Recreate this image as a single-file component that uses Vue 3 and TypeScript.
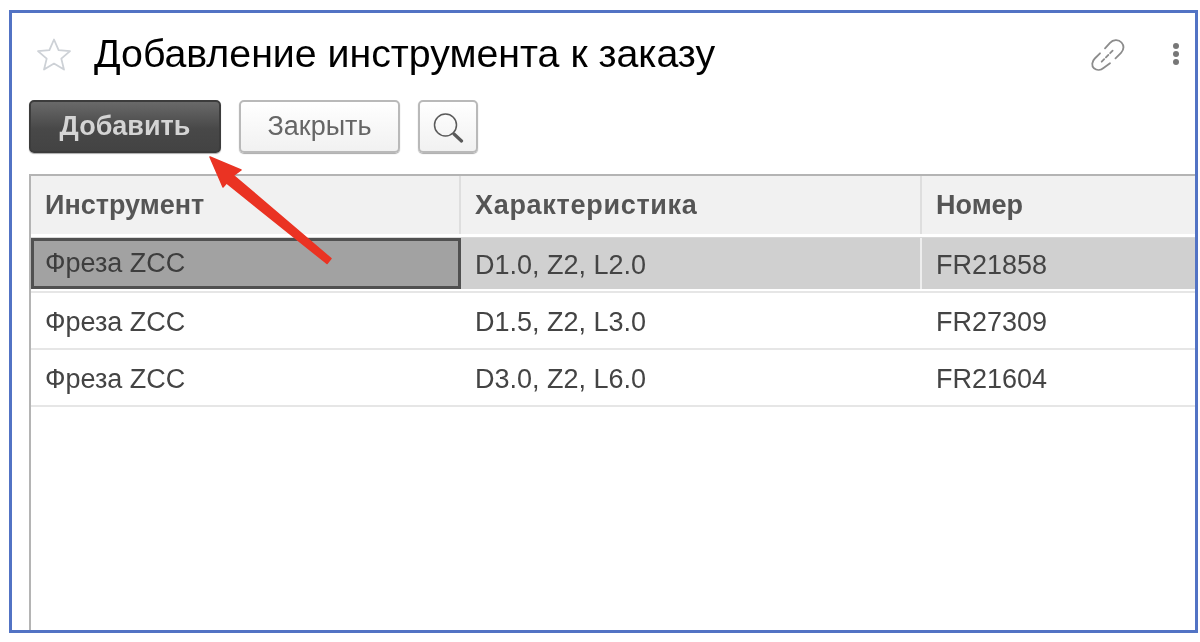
<template>
  <div class="frame">
    <header class="title-row">
      <svg class="star" width="36" height="34" viewBox="0 0 36 34">
        <path d="M18 2.500l4.600 10.600 11.400 1-8.700 7.500 2.700 11-10-6-10 6 2.700-11L2 14.100l11.400-1z" fill="#fff" stroke="#cdd1d6" stroke-width="1.800" stroke-linejoin="round" />
      </svg>
      <h1 class="title">Добавление инструмента к заказу</h1>
      <div class="title-icons">
        <svg class="link" width="36" height="36" viewBox="0 0 36 36" fill="none" stroke="#8c8c8c" stroke-width="1.800" stroke-linecap="round">
          <path d="M15 12.300L20 6.800C23 3.500 28.500 3 31.500 6.500 34.500 10 33.500 14 31 17L25.500 22.300" />
          <path d="M10 17.300L4.800 22.500C1.800 25.500 1.300 29.800 4 32.300 7 34.800 11 34 13.500 32L20 27.300" />
          <path d="M11.700 25.700L23.300 14" stroke-dasharray="3.500 2.500" />
        </svg>
        <div class="dots"><i /><i /><i /></div>
      </div>
    </header>

    <div class="toolbar">
      <button class="btn primary">Добавить</button>
      <button class="btn close">Закрыть</button>
      <button class="btn search">
        <svg width="32" height="32" viewBox="0 0 32 32" fill="none" stroke="#5a5a5a">
          <circle cx="13.500" cy="14" r="11" stroke-width="1.500" />
          <path d="M22 23l7.500 7" stroke-width="3.200" stroke-linecap="round" />
        </svg>
      </button>
    </div>

    <div class="grid">
      <div class="row head">
        <div v-for="h in heads" :key="h" class="cell">{{ h }}</div>
      </div>
      <div v-for="(r, i) in rows" :key="r.num" class="row" :class="{ selected: i === 0 }">
        <div class="cell" :class="{ current: i === 0 }">{{ r.tool }}</div>
        <div class="cell">{{ r.spec }}</div>
        <div class="cell">{{ r.num }}</div>
      </div>
    </div>

    <svg class="arrow" width="140" height="120" viewBox="0 0 140 120">
      <path d="M5 5L36 18 28.500 23.500 126 106.500 122 111.500 21.500 31 18 35z" fill="#ea3323" stroke="#ea3323" stroke-width="1.500" stroke-linejoin="round" />
    </svg>
  </div>
</template>

<script setup lang="ts">
interface Row {
  tool: string;
  spec: string;
  num: string;
}

const heads = ["Инструмент", "Характеристика", "Номер"];

const rows: Row[] = [
  { tool: "Фреза ZCC", spec: "D1.0, Z2, L2.0", num: "FR21858" },
  { tool: "Фреза ZCC", spec: "D1.5, Z2, L3.0", num: "FR27309" },
  { tool: "Фреза ZCC", spec: "D3.0, Z2, L6.0", num: "FR21604" },
];
</script>

<style>
html,
body {
  background: #fff;
  overflow: hidden;
}
</style>

<style scoped>
.frame {
  position: relative;
  box-sizing: border-box;
  width: 1189px;
  height: 623px;
  margin: 10px 0 0 9px;
  border: 3px solid #5273c4;
  background: #fff;
  padding: 0 0 0 17px;
  overflow: hidden;
  font-family: "Liberation Sans", Arial, sans-serif;
  filter: blur(0.5px);
}

.title-row {
  display: flex;
  align-items: center;
  box-sizing: border-box;
  height: 87px;
  padding: 0 0 6px 7px;
}

.star {
  flex: none;
}

.title {
  margin: 0 0 0 22px;
  font-size: 39.300px;
  font-weight: 400;
  color: #000;
  white-space: nowrap;
}

.title-icons {
  display: flex;
  align-items: center;
  margin-left: auto;
  padding-right: 16px;
}

.link {
  display: block;
}

.dots {
  display: flex;
  flex-direction: column;
  gap: 2px;
  margin-left: 47px;
}

.dots i {
  display: block;
  width: 6px;
  height: 6px;
  border-radius: 50%;
  background: #777;
}

.toolbar {
  display: flex;
  gap: 18px;
  height: 53px;
}

.btn {
  box-sizing: border-box;
  height: 53px;
  padding: 0;
  border: 2px solid #b9b9b9;
  border-radius: 5px;
  background: linear-gradient(#fff, #f1f1f1);
  font: 400 27px "Liberation Sans", Arial, sans-serif;
  color: #666;
  box-shadow: 0 1px 1px #aaa;
}

.primary {
  width: 192px;
  border-color: #3c3c3c;
  background: linear-gradient(#696969, #484848 55%, #434343);
  color: #d4d4d4;
  font-weight: 700;
}

.close {
  width: 161px;
}

.search {
  display: flex;
  align-items: center;
  justify-content: center;
  width: 60px;
}

.grid {
  margin-top: 21px;
  height: 460px;
  border-top: 2px solid #b4b4b4;
  border-left: 2px solid #b4b4b4;
}

.row {
  display: grid;
  grid-template-columns: 430px 461px 1fr;
  height: 57px;
  box-sizing: border-box;
  border-bottom: 2px solid #e6e6e6;
  font-size: 27px;
  color: #444;
}

.cell {
  display: flex;
  align-items: center;
  box-sizing: border-box;
  padding: 4px 0 0 14px;
  white-space: nowrap;
}

.head {
  height: 62px;
  padding-bottom: 3px;
  border-bottom: 1px solid #d8d8d8;
  background: #fff;
}

.head .cell {
  padding-top: 0;
  background: #f1f1f1;
  border-right: 2px solid #dedede;
  font-weight: 700;
  color: #555;
}

.head .cell:nth-child(2) {
  letter-spacing: 0.7px;
}

.head .cell:last-child,
.selected .cell:last-child {
  border-right: 0;
}

.selected {
  height: 55px;
  padding-bottom: 2px;
}

.selected .cell {
  padding-top: 3px;
  background: #d0d0d0;
  border-right: 2px solid #eee;
}

.selected .current {
  background: #a2a2a2;
  border: 3px solid #505050;
  padding-left: 11px;
  padding-top: 0;
  color: #3d3d3d;
}

.arrow {
  position: absolute;
  left: 193px;
  top: 139px;
}
</style>
